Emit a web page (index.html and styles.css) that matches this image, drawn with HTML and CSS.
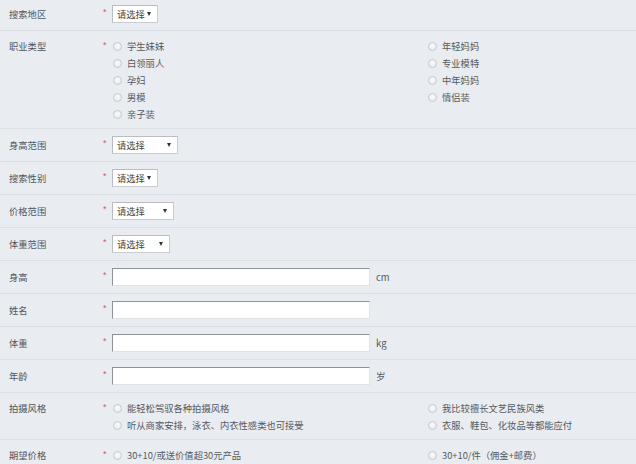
FILE: index.html
```html
<!DOCTYPE html>
<html lang="zh">
<head>
<meta charset="utf-8">
<link rel="stylesheet" href="styles.css">
</head>
<body>
<div class="form">
  <div class="row first">
    <div class="label">搜索地区</div><div class="req">*</div>
    <div class="ctrl"><span class="sel w46">请选择<i class="arr"></i></span></div>
  </div>
  <div class="row radios">
    <div class="label">职业类型</div><div class="req">*</div>
    <div class="ctrl opts">
      <div class="col">
        <div class="opt"><span class="radio"></span>学生妹妹</div>
        <div class="opt"><span class="radio"></span>白领丽人</div>
        <div class="opt"><span class="radio"></span>孕妇</div>
        <div class="opt"><span class="radio"></span>男模</div>
        <div class="opt"><span class="radio"></span>亲子装</div>
      </div>
      <div class="col">
        <div class="opt"><span class="radio"></span>年轻妈妈</div>
        <div class="opt"><span class="radio"></span>专业模特</div>
        <div class="opt"><span class="radio"></span>中年妈妈</div>
        <div class="opt"><span class="radio"></span>情侣装</div>
      </div>
    </div>
  </div>
  <div class="row">
    <div class="label">身高范围</div><div class="req">*</div>
    <div class="ctrl"><span class="sel w66">请选择<i class="arr"></i></span></div>
  </div>
  <div class="row">
    <div class="label">搜索性别</div><div class="req">*</div>
    <div class="ctrl"><span class="sel w46">请选择<i class="arr"></i></span></div>
  </div>
  <div class="row">
    <div class="label">价格范围</div><div class="req">*</div>
    <div class="ctrl"><span class="sel w62">请选择<i class="arr"></i></span></div>
  </div>
  <div class="row">
    <div class="label">体重范围</div><div class="req">*</div>
    <div class="ctrl"><span class="sel w58">请选择<i class="arr"></i></span></div>
  </div>
  <div class="row">
    <div class="label">身高</div><div class="req">*</div>
    <div class="ctrl"><input class="txt" type="text"><span class="unit">cm</span></div>
  </div>
  <div class="row">
    <div class="label">姓名</div><div class="req">*</div>
    <div class="ctrl"><input class="txt" type="text"></div>
  </div>
  <div class="row">
    <div class="label">体重</div><div class="req">*</div>
    <div class="ctrl"><input class="txt" type="text"><span class="unit">kg</span></div>
  </div>
  <div class="row">
    <div class="label">年龄</div><div class="req">*</div>
    <div class="ctrl"><input class="txt" type="text"><span class="unit">岁</span></div>
  </div>
  <div class="row radios">
    <div class="label">拍摄风格</div><div class="req">*</div>
    <div class="ctrl opts">
      <div class="col">
        <div class="opt"><span class="radio"></span>能轻松驾驭各种拍摄风格</div>
        <div class="opt"><span class="radio"></span>听从商家安排，泳衣、内衣性感类也可接受</div>
      </div>
      <div class="col">
        <div class="opt"><span class="radio"></span>我比较擅长文艺民族风类</div>
        <div class="opt"><span class="radio"></span>衣服、鞋包、化妆品等都能应付</div>
      </div>
    </div>
  </div>
  <div class="row radios">
    <div class="label">期望价格</div><div class="req">*</div>
    <div class="ctrl opts">
      <div class="col">
        <div class="opt"><span class="radio"></span>30+10/或送价值超30元产品</div>
      </div>
      <div class="col">
        <div class="opt"><span class="radio"></span>30+10/件（佣金+邮费）</div>
      </div>
    </div>
  </div>
</div>
</body>
</html>
```

FILE: styles.css
```css
html, body {
  margin: 0;
  padding: 0;
  background: #e9ecf1;
}
body {
  font-family: "Noto Sans CJK SC", "Noto Sans", sans-serif;
  font-size: 9.3px;
  color: #555a60;
  width: 636px;
  height: 464px;
  overflow: hidden;
}
.row {
  display: grid;
  grid-template-columns: 94px 9px 1fr;
  padding: 7px 0 7px 9px;
  border-bottom: 1px solid #dcdfe4;
  align-items: start;
}
.row.first {
  padding-top: 5px;
}
.row.radios {
  padding-bottom: 5px;
}
.label {
  line-height: 18px;
  color: #50555c;
}
.radios .label {
  line-height: 17px;
}
.req {
  color: #e0506a;
  font-size: 9px;
  line-height: 14px;
  font-family: "Liberation Sans", sans-serif;
}
.ctrl {
  display: flex;
  align-items: center;
}
.sel {
  box-sizing: border-box;
  height: 18px;
  background: #fff;
  border: 1px solid #c9cdd2;
  border-top-color: #b9bdc2;
  border-left-color: #b9bdc2;
  padding-left: 4px;
  display: flex;
  align-items: center;
  justify-content: space-between;
  line-height: 16px;
  color: #444;
}
.w46 { width: 46px; }
.w66 { width: 66px; }
.w62 { width: 62px; }
.w58 { width: 58px; }
.arr {
  width: 0;
  height: 0;
  border-left: 2.5px solid transparent;
  border-right: 2.5px solid transparent;
  border-top: 4px solid #333;
  margin-right: 6px;
}
.txt {
  box-sizing: border-box;
  width: 258px;
  height: 18px;
  margin: 0;
  padding: 0;
  background: #fff;
  border: 1px solid #dfe2e6;
  border-top-color: #8e9399;
  border-left-color: #8e9399;
  outline: none;
}
.unit {
  margin-left: 6px;
  color: #555a60;
  font-size: 9.5px;
}
.opts {
  display: grid;
  grid-template-columns: 315px 1fr;
  align-items: start;
}
.opt {
  height: 17px;
  line-height: 17px;
  display: flex;
  align-items: center;
  white-space: nowrap;
}
.radio {
  box-sizing: border-box;
  width: 9px;
  height: 9px;
  border-radius: 50%;
  border: 1px solid #c6cad0;
  background: radial-gradient(circle at 50% 40%, #fbfbfc, #e4e6ea);
  margin-left: 1px;
  margin-right: 5px;
  flex: none;
}
```
